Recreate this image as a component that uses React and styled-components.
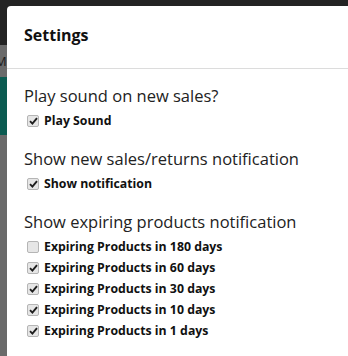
import React, { useState } from 'react';
import styled, { createGlobalStyle } from 'styled-components';

const GlobalStyle = createGlobalStyle`
    html, body {
        margin: 0;
        padding: 0;
        height: 100%;
        overflow: hidden;
    }
    #root {
        height: 100%;
    }
`;

const sections = [
    {
        title: 'Play sound on new sales?',
        options: [{ id: 'sound', label: 'Play Sound', checked: true }],
    },
    {
        title: 'Show new sales/returns notification',
        options: [{ id: 'notify', label: 'Show notification', checked: true }],
    },
    {
        title: 'Show expiring products notification',
        options: [
            { id: 'exp180', label: 'Expiring Products in 180 days', checked: false },
            { id: 'exp60', label: 'Expiring Products in 60 days', checked: true },
            { id: 'exp30', label: 'Expiring Products in 30 days', checked: true },
            { id: 'exp10', label: 'Expiring Products in 10 days', checked: true },
            { id: 'exp1', label: 'Expiring Products in 1 days', checked: true },
        ],
    },
];

function CheckRow({ label, checked, onToggle }) {
    return (
        <Row onClick={onToggle}>
            <Box $checked={checked}>
                {checked && (
                    <svg width="9" height="8" viewBox="0 0 9 8">
                        <path d="M1 4.2 L3.4 6.6 L8 1.2" fill="none" stroke="#1e1e1e" strokeWidth="1.9" />
                    </svg>
                )}
            </Box>
            <RowLabel>{label}</RowLabel>
        </Row>
    );
}

function App() {
    const initial = {};
    sections.forEach((s) => s.options.forEach((o) => { initial[o.id] = o.checked; }));
    const [values, setValues] = useState(initial);

    const toggle = (id) => setValues({ ...values, [id]: !values[id] });

    return (
        <Page>
            <GlobalStyle />
            <Backdrop>
                <Strip $bg="#232323" $h={45} />
                <Strip $bg="#6a6a6a" $h={32}><StripText>Ma</StripText></Strip>
                <Strip $bg="#0b5b51" $h={58} />
                <Strip $bg="#6a6a6a" $grow />
            </Backdrop>
            <Modal>
                <Header>
                    <Title>Settings</Title>
                </Header>
                <Body>
                    {sections.map((s) => (
                        <Section key={s.title}>
                            <Heading>{s.title}</Heading>
                            <Options>
                                {s.options.map((o) => (
                                    <CheckRow
                                        key={o.id}
                                        label={o.label}
                                        checked={values[o.id]}
                                        onToggle={() => toggle(o.id)}
                                    />
                                ))}
                            </Options>
                        </Section>
                    ))}
                </Body>
            </Modal>
        </Page>
    );
}

export default App;

const Page = styled.div`
    display: flex;
    height: 100%;
    font-family: "Open Sans", "Noto Sans", sans-serif;
    color: #111;
    background: #232323;
`;

const Backdrop = styled.div`
    display: flex;
    flex-direction: column;
    width: 7px;
    flex-shrink: 0;
    overflow: hidden;
`;

const Strip = styled.div`
    background: ${(p) => p.$bg};
    height: ${(p) => (p.$grow ? 'auto' : `${p.$h}px`)};
    flex: ${(p) => (p.$grow ? 1 : 'none')};
    display: flex;
    align-items: center;
`;

const StripText = styled.span`
    font-size: 13px;
    color: #1a1a1a;
    margin-left: -5px;
`;

const Modal = styled.div`
    flex: 1;
    margin-top: 6px;
    background: #fff;
    border-top-left-radius: 4px;
    display: flex;
    flex-direction: column;
`;

const Header = styled.div`
    padding: 17px 17px 20px;
    border-bottom: 1px solid #dcdcdc;
`;

const Title = styled.h2`
    margin: 0;
    font-size: 16px;
    line-height: 25px;
    font-weight: 700;
    color: #111;
`;

const Body = styled.div`
    display: flex;
    flex-direction: column;
    gap: 14px;
    padding: 13px 17px;
`;

const Section = styled.div`
    display: flex;
    flex-direction: column;
`;

const Heading = styled.div`
    font-size: 16.5px;
    line-height: 28px;
    color: #222;
`;

const Options = styled.div`
    display: flex;
    flex-direction: column;
`;

const Row = styled.label`
    display: flex;
    align-items: center;
    gap: 5px;
    height: 21px;
    padding-left: 3px;
    cursor: pointer;
`;

const Box = styled.span`
    width: 12px;
    height: 12px;
    box-sizing: border-box;
    border: 1px solid #b5b5b5;
    border-radius: 2px;
    background: #e6e6e6;
    display: flex;
    align-items: center;
    justify-content: center;
`;

const RowLabel = styled.span`
    font-size: 12.3px;
    font-weight: 700;
    color: #111;
`;
